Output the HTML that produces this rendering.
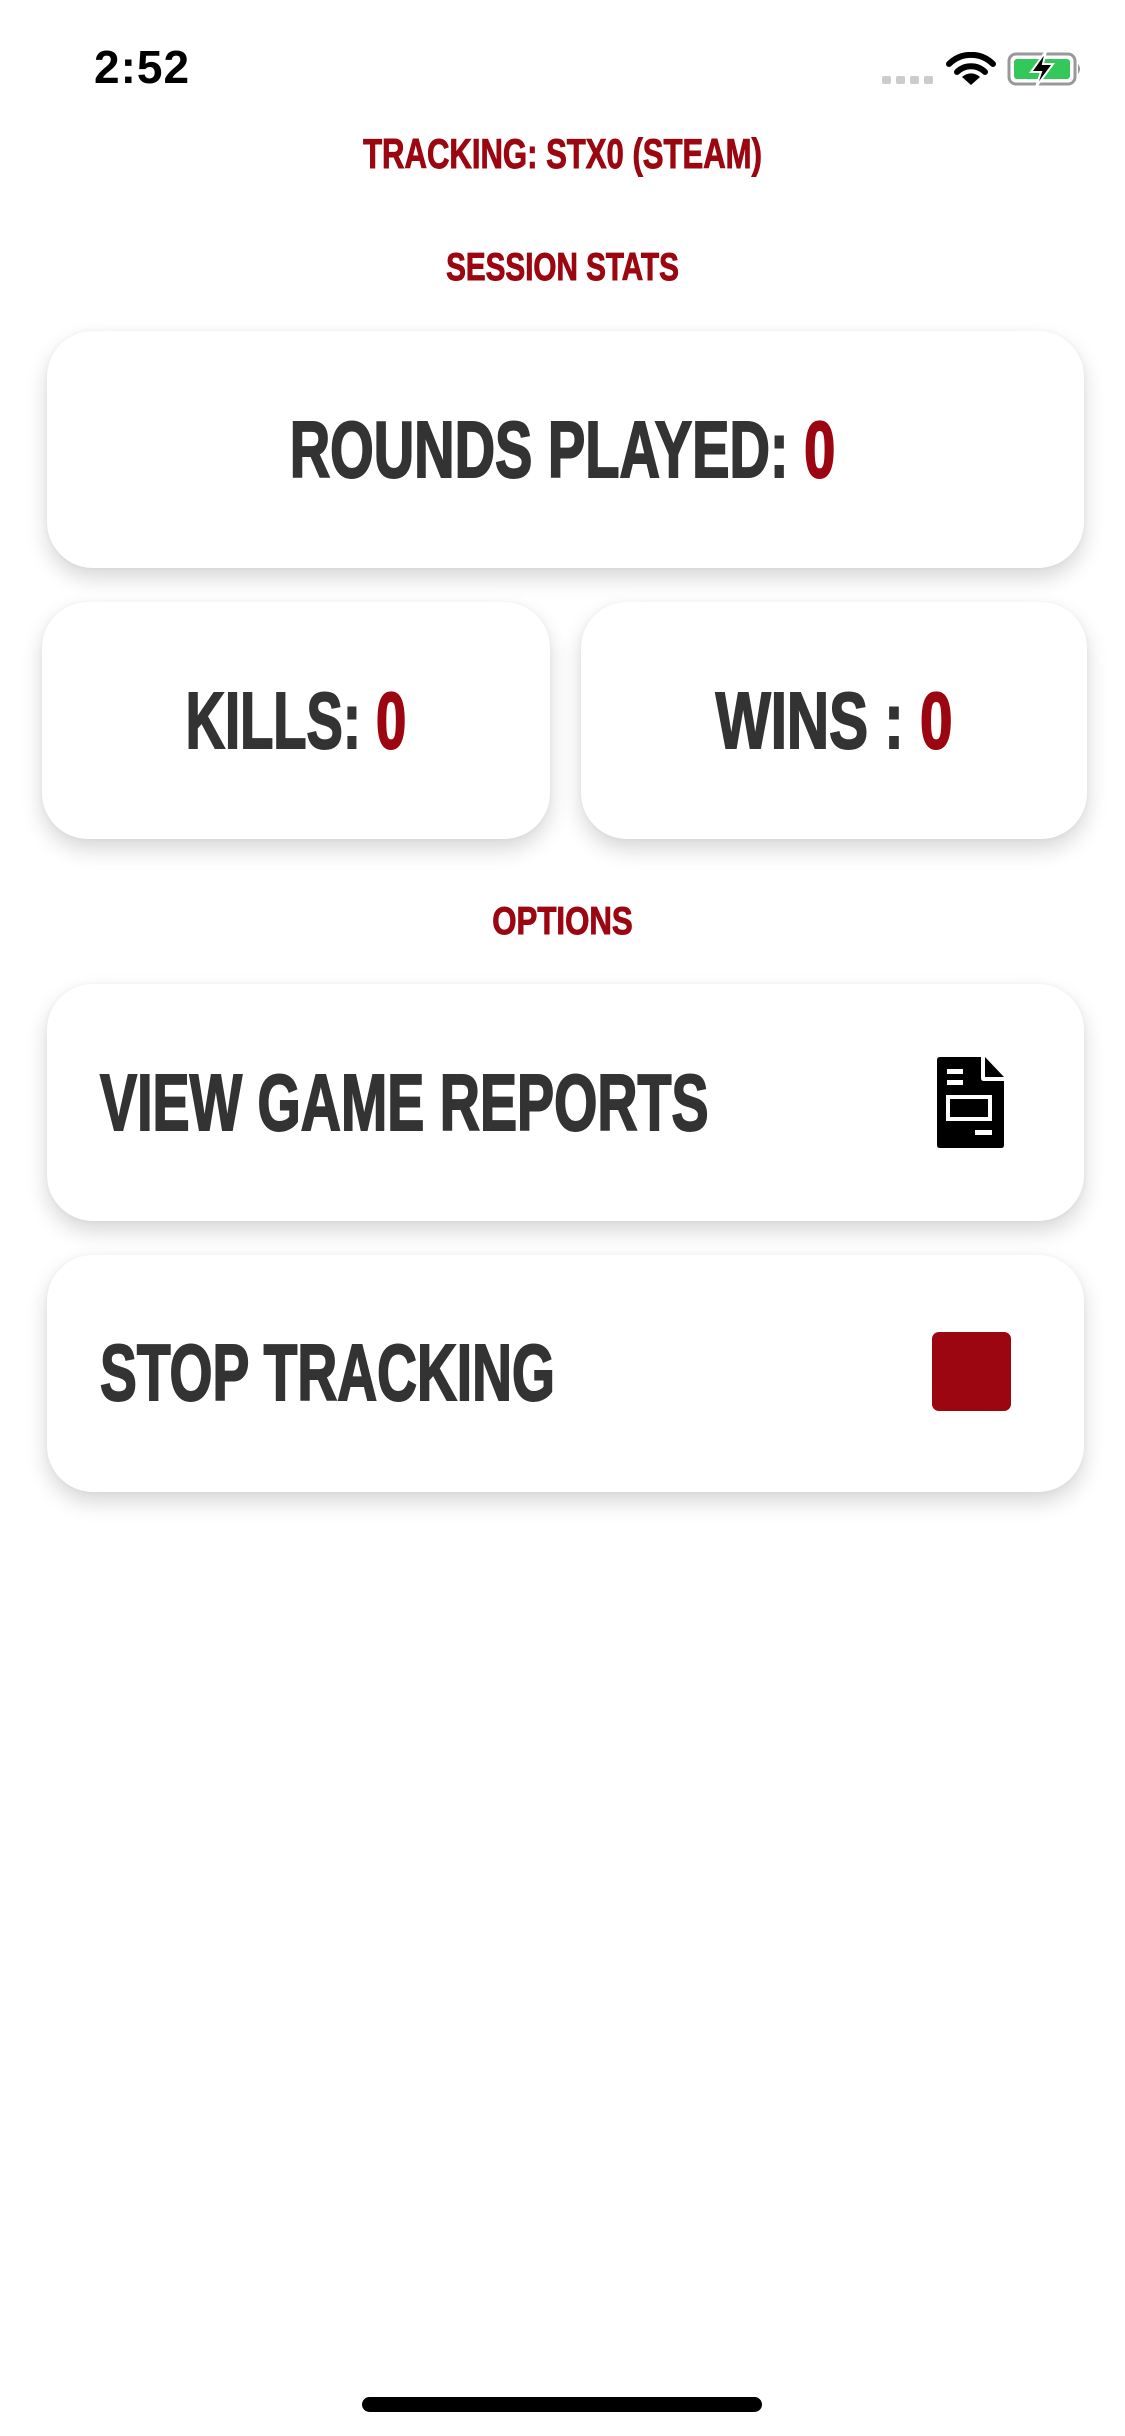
<!DOCTYPE html>
<html><head><meta charset="utf-8"><style>
html,body{margin:0;padding:0;background:#fff;}
body{width:1125px;height:2436px;position:relative;overflow:hidden;font-family:"Liberation Sans Narrow","Liberation Sans",sans-serif;font-weight:bold;}
.abs{position:absolute;}
.t{position:absolute;white-space:nowrap;transform-origin:center center;}
.red{color:#9b0610;}
.dark{color:#333;-webkit-text-stroke:2px #333;}
.dark .red{-webkit-text-stroke:2px #9b0610;}
.h{-webkit-text-stroke:1px #9b0610;}
.card{position:absolute;background:#fff;border-radius:46px;box-shadow:0 10px 22px rgba(0,0,0,0.16),0 0 6px rgba(0,0,0,0.04);}
.c{left:0;right:0;text-align:center;}
</style></head><body>
<div class="abs" style="left:94px;top:40px;font-family:'Liberation Sans',sans-serif;font-weight:600;font-size:46px;color:#000;letter-spacing:1px;">2:52</div>
<div class="abs" style="left:882px;top:76px;">
 <span class="abs" style="left:0;top:0;width:9px;height:8px;background:#ccc;border-radius:2px"></span>
 <span class="abs" style="left:14px;top:0;width:9px;height:8px;background:#ccc;border-radius:2px"></span>
 <span class="abs" style="left:28px;top:0;width:9px;height:8px;background:#ccc;border-radius:2px"></span>
 <span class="abs" style="left:42px;top:0;width:9px;height:8px;background:#ccc;border-radius:2px"></span>
</div>
<svg class="abs" style="left:946px;top:52px" width="50" height="34" viewBox="0 0 50 34">
 <path d="M3 12 A31 31 0 0 1 47 12" stroke="#000" stroke-width="6" fill="none" stroke-linecap="round"/>
 <path d="M11 20 A20 20 0 0 1 39 20" stroke="#000" stroke-width="6" fill="none" stroke-linecap="round"/>
 <path d="M25 33 L16 25 A13 13 0 0 1 34 25 Z" fill="#000"/>
</svg>
<svg class="abs" style="left:1006px;top:50px" width="80" height="38" viewBox="0 0 80 38">
 <rect x="3" y="4" width="66" height="30" rx="7" fill="none" stroke="#999" stroke-width="3"/>
 <rect x="8" y="9" width="56" height="20" rx="3" fill="#34c759"/>
 <path d="M72 14 Q76 19 72 24 Z" fill="#999"/>
 <path d="M40 1 L25 22 L35 22 L30 37 L47 14 L37 14 Z" fill="#000" stroke="#fff" stroke-width="2"/>
</svg>

<div class="t c red h" style="top:130px;font-size:42px;transform:scaleX(0.74);">TRACKING: STX0 (STEAM)</div>
<div class="t c red h" style="top:246px;font-size:39px;transform:scaleX(0.76);">SESSION STATS</div>

<div class="card" style="left:47px;top:331px;width:1037px;height:237px;"></div>
<div class="t c dark" style="top:404px;font-size:80px;transform:scaleX(0.70);">ROUNDS PLAYED: <span class="red">0</span></div>

<div class="card" style="left:42px;top:602px;width:508px;height:237px;"></div>
<div class="t dark" style="left:42px;width:508px;text-align:center;top:675px;font-size:80px;transform:scaleX(0.68);">KILLS: <span class="red">0</span></div>
<div class="card" style="left:581px;top:602px;width:506px;height:237px;"></div>
<div class="t dark" style="left:581px;width:506px;text-align:center;top:675px;font-size:80px;transform:scaleX(0.73);">WINS : <span class="red">0</span></div>

<div class="t c red h" style="top:900px;font-size:39px;transform:scaleX(0.8);">OPTIONS</div>

<div class="card" style="left:47px;top:984px;width:1037px;height:237px;"></div>
<div class="t dark" style="left:100px;top:1057px;font-size:80px;transform:scaleX(0.695);transform-origin:left center;">VIEW GAME REPORTS</div>
<svg class="abs" style="left:937px;top:1057px" width="70" height="92" viewBox="0 0 70 92">
 <path d="M3 0 H44 V21 Q44 24 47 24 H67 V88 Q67 91 64 91 H3 Q0 91 0 88 V3 Q0 0 3 0 Z" fill="#000"/>
 <path d="M48 0 L67 20 H48 Z" fill="#000"/>
 <rect x="10" y="12" width="16" height="5" fill="#fff"/>
 <rect x="10" y="23" width="16" height="5" fill="#fff"/>
 <rect x="11" y="40" width="42" height="22" fill="none" stroke="#fff" stroke-width="4"/>
 <rect x="38" y="73" width="17" height="5" fill="#fff"/>
</svg>

<div class="card" style="left:47px;top:1255px;width:1037px;height:237px;"></div>
<div class="t dark" style="left:100px;top:1327px;font-size:80px;transform:scaleX(0.69);transform-origin:left center;">STOP TRACKING</div>
<div class="abs" style="left:932px;top:1332px;width:79px;height:79px;background:#9b0610;border-radius:7px;"></div>

<div class="abs" style="left:362px;top:2397px;width:400px;height:15px;background:#000;border-radius:8px;"></div>
</body></html>
